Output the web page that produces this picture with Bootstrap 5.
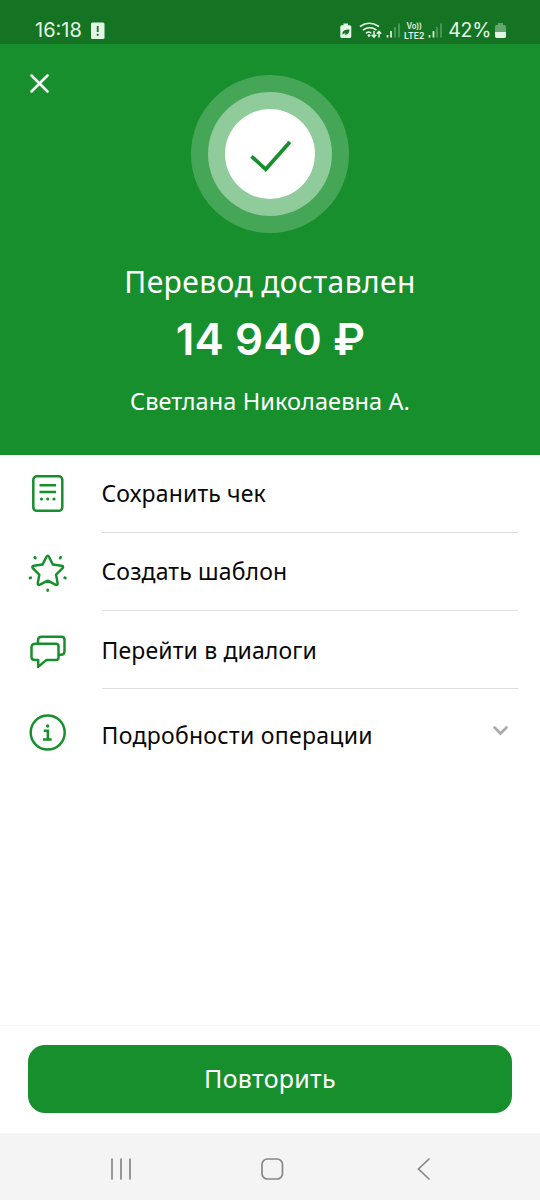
<!DOCTYPE html>
<html lang="ru">
<head>
<meta charset="utf-8">
<meta name="viewport" content="width=device-width, initial-scale=1">
<title>Перевод доставлен</title>
<link rel="stylesheet" href="https://cdn.jsdelivr.net/npm/bootstrap@5.3.0/dist/css/bootstrap.min.css">
<style>
:root{--green:#178f2c}
body{font-family:"Noto Sans",sans-serif;color:#080808;height:1200px;line-height:1;overflow:hidden}
svg{display:block;flex:none}
.status{height:44px;background:#147423;color:#e4f5e5;font-family:Inter,sans-serif;padding:17px 33px 0 35px}
.clock{font-size:20px;line-height:26px}
.percent{font-size:19.5px;line-height:27px;letter-spacing:-.3px}
.hero{height:410.5px;background:var(--green)}
.close-btn{top:29px;left:29px}
.rings{margin-top:31px}
.title{font-size:30px;line-height:40px;margin-top:29px;letter-spacing:.4px}
.amount{font:600 44px/60px Inter,sans-serif;margin-top:7px;letter-spacing:.1px;padding-left:1px}
.person{font-size:23.5px;line-height:32px;margin-top:16px;letter-spacing:.1px}
.item{height:78.3px;padding:0 22.5px 0 28px;font-size:23px;letter-spacing:.15px}
.item-text{margin-left:33.5px;border-bottom:1.5px solid #dedede;padding-top:1px}
.item-last{height:88px;letter-spacing:.3px}
.item-last .item-text{border:0;padding-top:4px}
.footer-box{height:108px;border-top:1px solid #f6f6f6;padding:19px 28px 0}
.repeat{height:68.5px;border-radius:17px;background:var(--green);color:#fff;font-size:25px;letter-spacing:.3px;border:0}
.repeat:hover{background:#117c24;color:#fff}
.sysnav{height:67.5px;background:#f4f4f4}
</style>
<script defer src="https://cdn.jsdelivr.net/npm/bootstrap@5.3.0/dist/js/bootstrap.bundle.min.js"></script>
</head>
<body class="d-flex flex-column bg-white">
<div class="status d-flex flex-shrink-0 justify-content-between">
  <div class="d-flex">
    <span class="clock">16:18</span>
    <svg class="ms-2 mt-1" width="16" height="20" viewBox="0 0 16 20"><rect x="1" y="1.500" width="13.500" height="16.500" rx="1.500" fill="#e4f5e5"/><path d="M7.700 5v6" stroke="#147423" stroke-width="1.800"/><circle cx="7.700" cy="13.800" r="1.100" fill="#147423"/></svg>
  </div>
  <svg width="108" height="27" viewBox="337 17 108 27" fill="none" stroke="#e4f5e5" class="ms-auto">
    <path d="M344.500 23.500h4.500v1.700h1.800q1.500 0 1.500 1.500v9.800q0 1.500-1.500 1.500h-8q-1.500 0-1.500-1.500v-9.800q0-1.500 1.500-1.500h1.700z" fill="#e4f5e5" stroke="none"/>
    <path d="M343.500 34.500q-1-5 7-5-.5 6-5 5l1.500-2" fill="#147423" stroke="none"/>
    <path d="M361 26.500q9-6.500 19 0M364 30q6.500-4.700 13.500 0M367 33.200q3.500-2.400 5 0" stroke-width="1.700"/>
    <circle cx="370" cy="35.600" r="1.400" fill="#e4f5e5" stroke="none"/>
    <path d="M375 31v6m-2.300-2.200 2.300 2.400 2.300-2.400M380 37.500v-6m-2.200 2.200 2.200-2.400 2.200 2.400" stroke-width="1.500"/>
    <path d="M388.500 35v2.500M392 31v6.500" stroke-width="1.700"/><path d="M396 27v10.500M400 23.500v14" stroke-width="1.700" opacity=".3"/>
    <g fill="#e4f5e5" stroke="none" font-family="Inter" font-weight="600"><text x="407.500" y="28.800" font-size="8.300" textLength="15.500" lengthAdjust="spacingAndGlyphs">Vo))</text><text x="405" y="38.500" font-size="9.500" textLength="20.500" lengthAdjust="spacingAndGlyphs">LTE2</text></g>
    <path d="M430.500 35v2.500M434.500 31v6.500" stroke-width="1.700"/><path d="M438 27v10.500M442 23.500v14" stroke-width="1.700" opacity=".3"/>
  </svg>
  <span class="percent ms-1">42%</span>
  <svg class="ms-1" width="12" height="27" viewBox="0 0 12 27"><path d="M3 6h5v2h1.500q1.500 0 1.500 1.500V15H0V9.500Q0 8 1.500 8H3z" fill="#64a66d"/><path d="M0 15h11v4.300q0 1.700-1.700 1.700H1.700Q0 21 0 19.300z" fill="#e4f5e5"/></svg>
</div>

<header class="hero position-relative flex-shrink-0 d-flex flex-column align-items-center text-white text-center">
  <button class="close-btn position-absolute btn border-0 p-0" aria-label="Закрыть"><svg width="21" height="21" viewBox="0 0 21 21" stroke="#fff" stroke-width="2.500" stroke-linecap="round"><path d="m2.500 2.500 16 16m0-16-16 16"/></svg></button>
  <svg class="rings" width="158" height="158" viewBox="0 0 158 158"><circle cx="79" cy="79" r="79" fill="#46a657"/><circle cx="79" cy="79" r="62" fill="#90cb9b"/><circle cx="79" cy="79" r="45" fill="#fff"/><path d="m60.500 81.300 14.200 13 24.200-27.300" fill="none" stroke="#178f2c" stroke-width="3.700"/></svg>
  <div class="title">Перевод доставлен</div>
  <div class="amount">14 940 ₽</div>
  <div class="person">Светлана Николаевна А.</div>
</header>

<main class="flex-grow-1">
  <div class="item d-flex">
    <svg class="align-self-center" width="40" height="40" viewBox="0 0 40 40" fill="none" stroke="#178f2c" stroke-width="2.500"><rect x="5.300" y="2.300" width="29" height="34.500" rx="3.500"/><path d="M11.500 11.200h16.500M11.500 18h16.500" stroke-width="2.600"/><g fill="#178f2c" stroke="none"><circle cx="13.500" cy="25" r="1.600"/><circle cx="19.700" cy="25" r="1.600"/><circle cx="26" cy="25" r="1.600"/></g></svg>
    <div class="item-text flex-grow-1 d-flex align-items-center">Сохранить чек</div>
  </div>
  <div class="item d-flex">
    <svg class="align-self-center" width="40" height="40" viewBox="0 0 40 40" fill="none" stroke="#178f2c" stroke-width="2.500" stroke-linejoin="round" stroke-linecap="round"><path d="M18.300 5q1.400-2.600 2.800 0l3.800 7.600 8.600 1.200q2.600.5.900 2.600l-6.300 6.200 1.500 8.500q.2 2.600-2.200 1.600l-7.700-4-7.700 4q-2.400 1-2.200-1.600l1.500-8.500-6.300-6.200q-1.700-2.100.9-2.600l8.600-1.200z"/><path d="m6.800 5.300.5.700m24.900 0 .5-.7M2 26l.7-.3m34 0 .7.300M19.700 38v.5" stroke-width="2.800"/></svg>
    <div class="item-text flex-grow-1 d-flex align-items-center">Создать шаблон</div>
  </div>
  <div class="item d-flex">
    <svg class="align-self-center" width="40" height="40" viewBox="0 0 40 40" fill="none" stroke="#178f2c" stroke-width="2.500" stroke-linejoin="round"><path d="M7.500 13.700h20.500q2.500 0 2.500 2.500v11.200q0 2.500-2.500 2.500H18.500l-8.300 7v-7h-3.200Q3.500 29.900 3.500 26.900v-9.700q0-3.500 4-3.500zM10 13V10.300q0-3.500 3.500-3.500h20q3 0 3 3v11.500q0 3.500-3.500 3.500h-1.700"/></svg>
    <div class="item-text flex-grow-1 d-flex align-items-center">Перейти в диалоги</div>
  </div>
  <div class="item item-last d-flex">
    <svg class="align-self-center" width="40" height="40" viewBox="0 0 40 40" fill="none" stroke="#178f2c" stroke-width="2.500"><circle cx="19.700" cy="19.500" r="17"/><path d="M15.700 17.700h4.200v8.800M15 26.500h8.700" stroke-width="2.600"/><circle cx="19.700" cy="13" r="1.700" fill="#178f2c" stroke="none"/></svg>
    <div class="item-text flex-grow-1 d-flex align-items-center">Подробности операции</div>
    <svg class="align-self-center" width="34" height="20" viewBox="0 0 34 20" fill="none" stroke="#aaa" stroke-width="2.700"><path d="m10.500 4.500 6 6 6-6" stroke-linecap="round"/></svg>
  </div>
</main>

<div class="footer-box flex-shrink-0"><button class="repeat btn w-100 d-flex align-items-center justify-content-center">Повторить</button></div>
<nav class="sysnav flex-shrink-0">
  <svg width="540" height="67" viewBox="0 0 540 67" fill="none" stroke="#878787" stroke-width="1.700" stroke-linecap="round"><path d="M112 26v20M121 26v20M130 26v20"/><rect x="262" y="26" width="20.500" height="20" rx="5.500"/><path d="m429 26-10.500 10 10.500 10"/></svg>
</nav>
</body>
</html>
